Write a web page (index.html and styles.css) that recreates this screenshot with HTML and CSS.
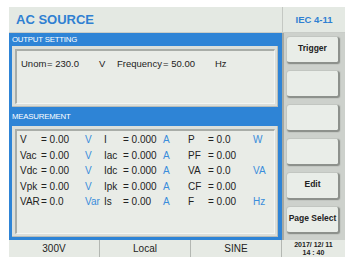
FILE: index.html
```html
<!doctype html>
<html>
<head>
<meta charset="utf-8">
<title>AC Source</title>
<link rel="stylesheet" href="styles.css">
</head>
<body>
<div class="screen">
  <div class="head">
    <div class="title">AC SOURCE</div>
    <div class="std">IEC 4-11</div>
  </div>
  <div class="main">
    <div class="panel">
      <div class="cap">OUTPUT SETTING</div>
      <div class="box out">
        <div class="inset">
          <div class="set">
            <span class="s-name">Unom</span><span class="s-val">= 230.0</span><span class="s-unit">V</span>
            <span class="s-name f">Frequency</span><span class="s-val">= 50.00</span><span class="s-unit">Hz</span>
          </div>
        </div>
      </div>
      <div class="cap cap2">MEASUREMENT</div>
      <div class="box meas">
        <div class="inset">
          <div class="grid">
            <span class="k">V</span><span class="v">= 0.00</span><span class="u">V</span>
            <span class="k">I</span><span class="v">= 0.000</span><span class="u">A</span>
            <span class="k">P</span><span class="v">= 0.0</span><span class="u">W</span>

            <span class="k">Vac</span><span class="v">= 0.00</span><span class="u">V</span>
            <span class="k">Iac</span><span class="v">= 0.000</span><span class="u">A</span>
            <span class="k">PF</span><span class="v">= 0.00</span><span class="u"></span>

            <span class="k">Vdc</span><span class="v">= 0.00</span><span class="u">V</span>
            <span class="k">Idc</span><span class="v">= 0.000</span><span class="u">A</span>
            <span class="k">VA</span><span class="v">= 0.0</span><span class="u">VA</span>

            <span class="k">Vpk</span><span class="v">= 0.00</span><span class="u">V</span>
            <span class="k">Ipk</span><span class="v">= 0.000</span><span class="u">A</span>
            <span class="k">CF</span><span class="v">= 0.00</span><span class="u"></span>

            <span class="k">VAR</span><span class="v">= 0.0</span><span class="u var">Var</span>
            <span class="k">Is</span><span class="v">= 0.00</span><span class="u">A</span>
            <span class="k">F</span><span class="v">= 0.00</span><span class="u">Hz</span>
          </div>
        </div>
      </div>
    </div>
    <div class="keys">
      <div class="key">Trigger</div>
      <div class="key"></div>
      <div class="key"></div>
      <div class="key"></div>
      <div class="key">Edit</div>
      <div class="key">Page Select</div>
    </div>
  </div>
  <div class="status">
    <div class="cell">300V</div>
    <div class="cell">Local</div>
    <div class="cell">SINE</div>
    <div class="cell date">2017/ 12/ 11<br>14 : 40</div>
  </div>
</div>
</body>
</html>
```
FILE: styles.css
```css
*{margin:0; padding:0; box-sizing:border-box;}
body{background:#fff; font-family:"Liberation Sans", Arial, sans-serif; color:#222;}
.screen{width:336px; margin:7px 0 0 9px;}

.head{display:flex; height:26px; background:#e4e9e3; border-bottom:1px solid #c9cdc8;}
.title{width:273px; padding-left:7px; font-size:13px; font-weight:bold; color:#2f80d2; line-height:26px;}
.std{flex:1; border-left:1px solid #c4c8c3; text-align:center; font-size:9.5px; font-weight:bold; color:#2f80d2; line-height:26px;}

.main{display:flex; height:207px;}
.panel{width:273px; background:#2e84d6; padding:0 4px 3px 3px; display:flex; flex-direction:column;}
.cap{height:13px; line-height:14px; font-size:7.8px; color:#fff; letter-spacing:-0.2px;}
.cap2{height:19px; line-height:20px;}

.box{background:#dcdfda; padding:3px 2px 2px 3px; border-right:1px solid #b9bdb8; border-bottom:1px solid #b9bdb8;}
.out{height:61px;}
.meas{flex:1;}
.inset{height:100%; background:#e9ece7; border-top:2px solid #a9ada8; border-left:2px solid #a9ada8; border-right:1px solid #f4f6f3; border-bottom:1px solid #f4f6f3;}

.set{display:flex; font-size:9.5px; padding:7px 0 0 4px; line-height:12px;}
.s-name{width:26px;}
.s-val{width:52px;}
.s-unit{width:18px;}
.s-name.f{width:46px;}

.grid{display:grid; grid-template-columns:21px 44px 19px 19px 40px 25px 20px 45px 20px; padding:1px 0 0 3px; font-size:10px; line-height:15.5px; white-space:nowrap;}
.u{color:#3a8ddb;}

.keys{flex:1; background:#cdd1cc; border-left:2px solid #a4a8a3; padding:4px 0 0 3px; display:flex; flex-direction:column; gap:7px;}
.key{width:53px; height:27px; background:#e9ede8; border-radius:3px; border-right:2px solid #8d918c; border-bottom:2px solid #8d918c; box-shadow:0 0 0 1px #c2c6c1; font-size:8.5px; font-weight:bold; color:#222; text-align:center; line-height:22px;}

.status{display:flex; height:17px; background:#e6eae4;}
.cell{width:91px; text-align:center; font-size:10px; line-height:17px; border-right:1px solid #b3b7b2;}
.cell.date{flex:1; border-right:none; font-size:7px; font-weight:bold; line-height:8px; padding-top:1px;}
```
